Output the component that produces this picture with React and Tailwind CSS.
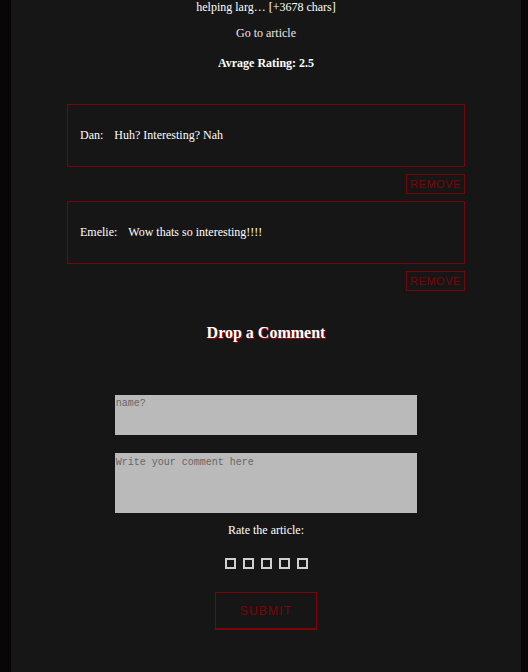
import React from "react";

const comments = [
  { name: "Dan", text: "Huh? Interesting? Nah" },
  { name: "Emelie", text: "Wow thats so interesting!!!!" },
];

function Comment({ name, text }) {
  return (
    <li className="flex flex-col items-end gap-[7px]">
      <div className="flex h-[63px] w-full items-center gap-[11px] border border-[#75060a] px-[12px] pb-[2px]">
        <p>{name}:</p>
        <p>{text}</p>
      </div>
      <button
        type="button"
        className="h-[20px] border border-[#75060a] px-[3px] font-['Liberation_Sans',Arial,sans-serif] text-[11px] leading-[18px] tracking-wider text-[#7e0408]"
      >
        REMOVE
      </button>
    </li>
  );
}

function CommentForm() {
  return (
    <form className="mx-auto flex w-[76%] flex-col items-center" onSubmit={(e) => e.preventDefault()}>
      <textarea
        aria-label="Name"
        placeholder="name?"
        className="block h-[40px] w-full resize-none bg-[#bababa] px-px py-[3px] font-['Liberation_Mono',monospace] text-[10px] leading-[12px] text-black placeholder:text-[#666666]"
      />
      <textarea
        aria-label="Comment"
        placeholder="Write your comment here"
        className="mt-[18px] block h-[60px] w-full resize-none bg-[#bababa] px-px py-[4px] font-['Liberation_Mono',monospace] text-[10px] leading-[12px] text-black placeholder:text-[#666666]"
      />
      <fieldset className="mt-[10px] flex flex-col items-center">
        <legend className="mx-auto leading-[14px]">Rate the article:</legend>
        <div className="mt-[21px] flex gap-[7px]">
          {[1, 2, 3, 4, 5].map((n) => (
            <input
              key={n}
              type="radio"
              name="rating"
              value={n}
              aria-label={`Rating ${n}`}
              className="size-[11px] appearance-none border-2 border-[#d0d0d0] checked:bg-[#7a0006]"
            />
          ))}
        </div>
      </fieldset>
      <button
        type="submit"
        className="mt-[23px] h-[38px] border border-b-2 border-[#7e0408] px-[24px] font-['Liberation_Sans',Arial,sans-serif] text-[12px] tracking-widest text-[#7e0408]"
      >
        SUBMIT
      </button>
    </form>
  );
}

export default function App() {
  return (
    <div className="min-h-screen bg-[#080607] pr-[7px] pl-[11px] font-['Liberation_Serif','Times_New_Roman',serif] text-[12px] leading-[14px] text-white">
      <main className="min-h-screen bg-[#161616] px-[56px] pb-[42px]">
        <header className="flex flex-col items-center text-center">
          <p>helping larg… [+3678 chars]</p>
          <a href="#article" className="mt-[12px] text-[#eee4e4]">
            Go to article
          </a>
          <p className="mt-[16px] font-bold">Avrage Rating: 2.5</p>
        </header>
        <ul className="mt-[34px] flex flex-col gap-[7px]">
          {comments.map((c) => (
            <Comment key={c.name} name={c.name} text={c.text} />
          ))}
        </ul>
        <h2 className="mt-[32px] mb-[52px] text-center text-[16px] leading-[20px] font-bold [text-shadow:1px_1px_1px_#b0000a]">
          Drop a Comment
        </h2>
        <CommentForm />
      </main>
    </div>
  );
}
